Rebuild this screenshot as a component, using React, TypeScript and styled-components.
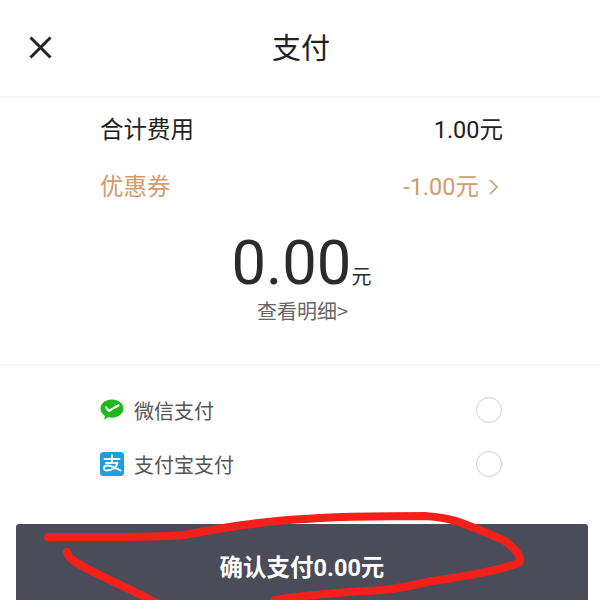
import React from "react";
import styled, { createGlobalStyle } from "styled-components";

const GlobalStyle = createGlobalStyle`
  html, body {
    margin: 0;
    padding: 0;
    background: #fff;
  }
  body {
    font-family: "Roboto", "Noto Sans CJK SC", sans-serif;
  }
`;

const Page = styled.div`
  position: relative;
  width: 600px;
  height: 600px;
  overflow: hidden;
  background: #fff;
`;

const Header = styled.header`
  position: relative;
  height: 92px;
  padding-bottom: 4px;
  display: flex;
  align-items: center;
  justify-content: center;
  border-bottom: 2px solid #f3f3f3;
`;

const CloseButton = styled.button`
  position: absolute;
  left: 29px;
  top: 36px;
  width: 23px;
  height: 23px;
  padding: 0;
  border: 0;
  background: none;
  svg {
    display: block;
  }
`;

const Title = styled.h1`
  margin: 0 0 0 2px;
  font-size: 29px;
  font-weight: 400;
  color: #222;
  font-family: "Noto Sans CJK SC", sans-serif;
`;

const Summary = styled.section`
  height: 266px;
  padding: 0 97px 0 100px;
  border-bottom: 2px solid #f6f6f6;
  display: flex;
  flex-direction: column;
`;

const FeeRow = styled.div<{ $accent?: boolean }>`
  display: flex;
  align-items: center;
  justify-content: space-between;
  height: 57px;
  font-size: 23.5px;
  color: ${(p) => (p.$accent ? "#d29b6e" : "#222")};
  &:first-child {
    margin-top: 1px;
  }
`;

const Chevron = styled.span`
  display: inline-flex;
  margin: 0 5px 0 10px;
  svg {
    display: block;
  }
`;

const Total = styled.div`
  display: flex;
  justify-content: center;
  align-items: baseline;
  height: 58px;
  margin-top: 21px;
  color: #2b2b2b;
`;

const TotalValue = styled.span`
  font-size: 61.5px;
  line-height: 58px;
`;

const TotalUnit = styled.span`
  font-size: 20px;
  line-height: 20px;
  font-family: "Noto Sans CJK SC", sans-serif;
`;

const DetailLink = styled.div`
  text-align: center;
  font-size: 20px;
  line-height: 28px;
  color: #666;
  margin-top: 5px;
  padding-left: 2px;
  font-family: "Noto Sans CJK SC", sans-serif;
`;

const PayList = styled.section`
  padding: 17px 98px 0 100px;
`;

const PayRow = styled.div`
  display: flex;
  align-items: center;
  height: 54px;
  font-size: 20px;
  color: #555;
  font-family: "Noto Sans CJK SC", sans-serif;
`;

const PayLabel = styled.span`
  margin-left: 10px;
  flex: 1;
`;

const Radio = styled.span`
  width: 26px;
  height: 26px;
  border-radius: 50%;
  border: 1px solid #cfcfcf;
  box-sizing: border-box;
`;

const ConfirmButton = styled.button`
  display: flex;
  align-items: center;
  justify-content: center;
  width: 572px;
  height: 84px;
  margin: 33px 0 0 16px;
  padding: 0;
  border: 0;
  border-radius: 3px;
  background: #4a4c5a;
  color: #fff;
  font-size: 23.5px;
  font-weight: 700;
  font-family: "Roboto", "Noto Sans CJK SC", sans-serif;
`;

const Scribble = styled.svg`
  position: absolute;
  left: 0;
  top: 0;
  pointer-events: none;
`;

const WechatIcon = () => (
  <svg width="24" height="24" viewBox="0 0 24 24">
    <path
      d="M12 1.500C5.600 1.500.500 5.400.500 10.600c0 3 1.800 5.600 4.500 7.300l-1 3.600 4.300-2.300c1.200.3 2.400.5 3.700.5 6.400 0 11.500-4 11.500-9.100S18.400 1.500 12 1.500z"
      fill="#1eb91a"
    />
    <path d="M6 9.500l3 3.400 9.500-5.700" fill="none" stroke="#fff" strokeWidth="2.200" strokeLinecap="round" strokeLinejoin="round" />
  </svg>
);

const AlipayIcon = () => (
  <svg width="24" height="24" viewBox="0 0 24 24">
    <rect width="24" height="24" rx="3.500" fill="#1a9fe0" />
    <path
      d="M4.500 7h15M12 3.500V11M6 11h11.500c-1.200 4-4.500 7-10 7.500-2.500.2-3.500-1-3.500-2.300 0-1.700 1.500-2.700 3.500-2.700 3.500 0 7 2 13 5"
      fill="none"
      stroke="#fff"
      strokeWidth="1.900"
      strokeLinecap="round"
      strokeLinejoin="round"
    />
  </svg>
);

export default function App() {
  return (
    <Page>
      <GlobalStyle />
      <Header>
        <CloseButton aria-label="close">
          <svg width="23" height="23" viewBox="0 0 23 23">
            <path d="M1.500 1.500l20 20M21.500 1.500l-20 20" stroke="#222" strokeWidth="3" />
          </svg>
        </CloseButton>
        <Title>支付</Title>
      </Header>
      <Summary>
        <FeeRow>
          <span>合计费用</span>
          <span>1.00元</span>
        </FeeRow>
        <FeeRow $accent>
          <span>优惠券</span>
          <span>
            -1.00元
            <Chevron>
              <svg width="9" height="16" viewBox="0 0 9 16">
                <path d="M1 1l7 7-7 7" fill="none" stroke="#d29b6e" strokeWidth="1.600" />
              </svg>
            </Chevron>
          </span>
        </FeeRow>
        <Total>
          <TotalValue>0.00</TotalValue>
          <TotalUnit>元</TotalUnit>
        </Total>
        <DetailLink>查看明细&gt;</DetailLink>
      </Summary>
      <PayList>
        <PayRow>
          <WechatIcon />
          <PayLabel>微信支付</PayLabel>
          <Radio />
        </PayRow>
        <PayRow>
          <AlipayIcon />
          <PayLabel>支付宝支付</PayLabel>
          <Radio />
        </PayRow>
      </PayList>
      <ConfirmButton>确认支付0.00元</ConfirmButton>
      <Scribble width="600" height="600" viewBox="0 0 600 600">
        <path
          d="M48 537C95 537 150 538 184 535C215 529 240 525 268 522C295 519 320 518 344 517C375 516 400 516 425 516C440 517 450 519 459 522C475 528 490 534 505 541C514 548 520 554 520 560C520 564 515 564 509 566C490 572 460 577 432 581C410 586 395 589 383 590C345 592 310 594 275 600"
          fill="none"
          stroke="#f5201a"
          strokeWidth="8"
          strokeLinecap="round"
          strokeLinejoin="round"
        />
        <path
          d="M67 552C68 557 71 559 77 563C100 577 130 588 158 604"
          fill="none"
          stroke="#f5201a"
          strokeWidth="8"
          strokeLinecap="round"
          strokeLinejoin="round"
        />
      </Scribble>
    </Page>
  );
}
